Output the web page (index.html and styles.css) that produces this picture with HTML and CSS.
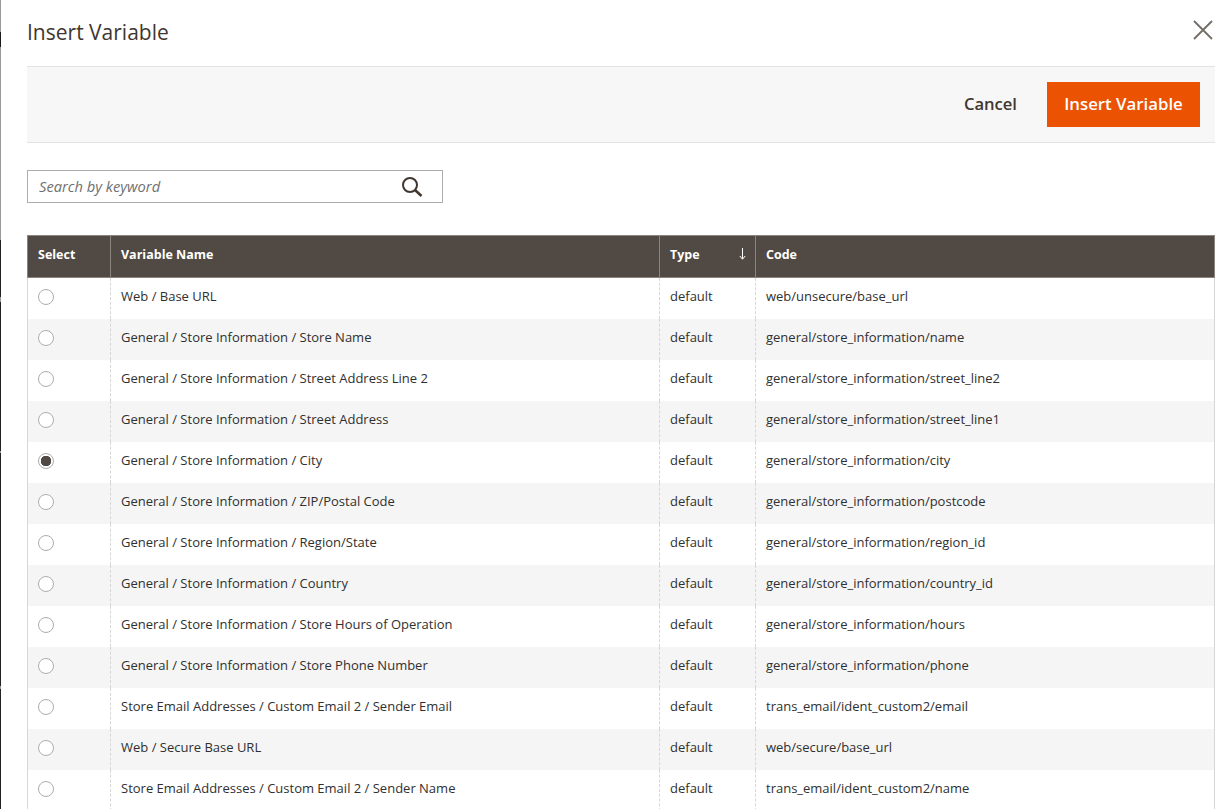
FILE: index.html
```html
<!DOCTYPE html>
<html lang="en">
  <head>
    <meta charset="UTF-8" />
    <meta name="viewport" content="width=device-width, initial-scale=1.0" />
    <title>Insert Variable</title>
    <link rel="stylesheet" href="styles.css">
  </head>
  <body>
    <div class="backdrop-edge"></div>
    <div class="modal">
      <header class="modal-header">
        <h1 class="modal-title">Insert Variable</h1>
        <button class="close-btn" aria-label="Close">
          <svg width="20" height="20" viewBox="0 0 20 20">
            <path d="M1 1 L19 19 M19 1 L1 19" stroke="#736c66" stroke-width="1.8" fill="none" />
          </svg>
        </button>
      </header>

      <div class="toolbar">
        <button class="cancel-btn">Cancel</button>
        <button class="primary-btn">Insert Variable</button>
      </div>

      <div class="search">
        <input class="search-input" type="text" placeholder="Search by keyword" />
        <svg class="search-icon" width="22" height="22" viewBox="0 0 22 22">
          <circle cx="9" cy="9" r="7" stroke="#41362f" stroke-width="2" fill="none" />
          <path d="M14 14 L20.5 20" stroke="#41362f" stroke-width="2.6" fill="none" />
        </svg>
      </div>

      <table class="grid">
        <colgroup>
          <col class="col-select" />
          <col class="col-name" />
          <col class="col-type" />
          <col />
        </colgroup>
        <thead>
          <tr>
            <th>Select</th>
            <th>Variable Name</th>
            <th class="sorted">
              Type
              <svg class="sort-arrow" width="7" height="12" viewBox="0 0 7 12">
                <path d="M3.5 0 V11 M0.8 8 L3.5 11.2 L6.2 8" stroke="#fff" stroke-width="1" fill="none" />
              </svg>
            </th>
            <th>Code</th>
          </tr>
        </thead>
        <tbody>
          <tr>
            <td><span class="radio"></span></td>
            <td>Web / Base URL</td>
            <td>default</td>
            <td>web/unsecure/base_url</td>
          </tr>
          <tr>
            <td><span class="radio"></span></td>
            <td>General / Store Information / Store Name</td>
            <td>default</td>
            <td>general/store_information/name</td>
          </tr>
          <tr>
            <td><span class="radio"></span></td>
            <td>General / Store Information / Street Address Line 2</td>
            <td>default</td>
            <td>general/store_information/street_line2</td>
          </tr>
          <tr>
            <td><span class="radio"></span></td>
            <td>General / Store Information / Street Address</td>
            <td>default</td>
            <td>general/store_information/street_line1</td>
          </tr>
          <tr>
            <td><span class="radio checked"></span></td>
            <td>General / Store Information / City</td>
            <td>default</td>
            <td>general/store_information/city</td>
          </tr>
          <tr>
            <td><span class="radio"></span></td>
            <td>General / Store Information / ZIP/Postal Code</td>
            <td>default</td>
            <td>general/store_information/postcode</td>
          </tr>
          <tr>
            <td><span class="radio"></span></td>
            <td>General / Store Information / Region/State</td>
            <td>default</td>
            <td>general/store_information/region_id</td>
          </tr>
          <tr>
            <td><span class="radio"></span></td>
            <td>General / Store Information / Country</td>
            <td>default</td>
            <td>general/store_information/country_id</td>
          </tr>
          <tr>
            <td><span class="radio"></span></td>
            <td>General / Store Information / Store Hours of Operation</td>
            <td>default</td>
            <td>general/store_information/hours</td>
          </tr>
          <tr>
            <td><span class="radio"></span></td>
            <td>General / Store Information / Store Phone Number</td>
            <td>default</td>
            <td>general/store_information/phone</td>
          </tr>
          <tr>
            <td><span class="radio"></span></td>
            <td>Store Email Addresses / Custom Email 2 / Sender Email</td>
            <td>default</td>
            <td>trans_email/ident_custom2/email</td>
          </tr>
          <tr>
            <td><span class="radio"></span></td>
            <td>Web / Secure Base URL</td>
            <td>default</td>
            <td>web/secure/base_url</td>
          </tr>
          <tr>
            <td><span class="radio"></span></td>
            <td>Store Email Addresses / Custom Email 2 / Sender Name</td>
            <td>default</td>
            <td>trans_email/ident_custom2/name</td>
          </tr>
        </tbody>
      </table>
    </div>
  </body>
</html>
```

FILE: styles.css
```css
html,
body {
  height: 100%;
  overflow: hidden;
}

body {
  margin: 0;
  display: flex;
  background-color: #fff;
  color: #41362f;
  font-family: "Open Sans", "Liberation Sans", sans-serif;
  font-size: 13px;
}

/* sliver of the page behind the modal */
.backdrop-edge {
  flex: 0 0 1px;
  background: linear-gradient(
    #999 0 32px,
    #1c1a18 32px 47px,
    #999 47px 240px,
    #222 240px 297px,
    #999 297px 302px,
    #222 302px 451px,
    #999 451px 453px,
    #222 453px 686px,
    #999 686px 689px,
    #222 689px
  );
}

.modal {
  flex: 1;
  min-width: 0;
  padding: 0 12px 0 26px;
}

.modal-header {
  height: 66px;
  display: flex;
  justify-content: space-between;
  align-items: flex-start;
}

.modal-title {
  margin: 18px 0 0;
  font-size: 21px;
  font-weight: 400;
  line-height: 28px;
}

.close-btn {
  margin: 20px 2px 0 0;
  padding: 0;
  border: 0;
  background: none;
  line-height: 0;
}

.toolbar {
  height: 75px;
  display: flex;
  justify-content: flex-end;
  align-items: center;
  gap: 30px;
  padding-right: 15px;
  border-top: 1px solid #e3e3e3;
  border-bottom: 1px solid #e3e3e3;
  background-color: #f7f7f7;
}

.cancel-btn {
  padding: 0 0 2px;
  border: 0;
  background: none;
  color: #41362f;
  font-family: inherit;
  font-size: 16.6px;
  font-weight: 600;
}

.primary-btn {
  width: 153px;
  height: 45px;
  padding: 0 0 2px;
  border: 0;
  background-color: #eb5202;
  color: #fff;
  font-family: inherit;
  font-size: 16.8px;
  font-weight: 600;
}

.search {
  position: relative;
  width: 416px;
  margin-top: 27px;
}

.search-input {
  display: block;
  box-sizing: border-box;
  width: 100%;
  height: 33px;
  padding: 0 50px 2px 11px;
  border: 1px solid #adadad;
  border-radius: 0;
  outline: none;
  font-family: inherit;
  font-size: 14.7px;
}

.search-input::placeholder {
  color: #707070;
  font-style: italic;
  opacity: 1;
}

.search-icon {
  position: absolute;
  top: 6px;
  right: 20.5px;
}

.grid {
  width: 100%;
  margin-top: 32px;
  border-collapse: collapse;
  table-layout: fixed;
}

.col-select {
  width: 83px;
}

.col-name {
  width: 549px;
}

.col-type {
  width: 96px;
}

.grid th {
  height: 42px;
  box-sizing: border-box;
  padding: 0 10px 5px;
  border: 1px solid #8a837e;
  background-color: #514943;
  color: #fff;
  font-size: 12.5px;
  font-weight: 700;
  text-align: left;
}

.sorted {
  position: relative;
}

.sort-arrow {
  position: absolute;
  top: 12px;
  right: 9px;
}

.grid td {
  height: 41px;
  box-sizing: border-box;
  padding: 0 10px 4px;
  border-left: 1px dashed #d6d6d6;
  border-right: 1px dashed #d6d6d6;
  color: #303030;
  vertical-align: middle;
}

.grid td:first-child {
  border-left: 1px solid #d6d6d6;
}

.grid td:last-child {
  border-right: 1px solid #d6d6d6;
}

.grid tbody tr:nth-child(even) td {
  background-color: #f5f5f5;
}

.radio {
  display: block;
  box-sizing: border-box;
  width: 16px;
  height: 16px;
  margin-top: 2px;
  border: 1px solid #adadad;
  border-radius: 50%;
  background-color: #fff;
}

.radio.checked {
  background: radial-gradient(circle, #514943 0 5px, #fff 5.5px);
}
```
